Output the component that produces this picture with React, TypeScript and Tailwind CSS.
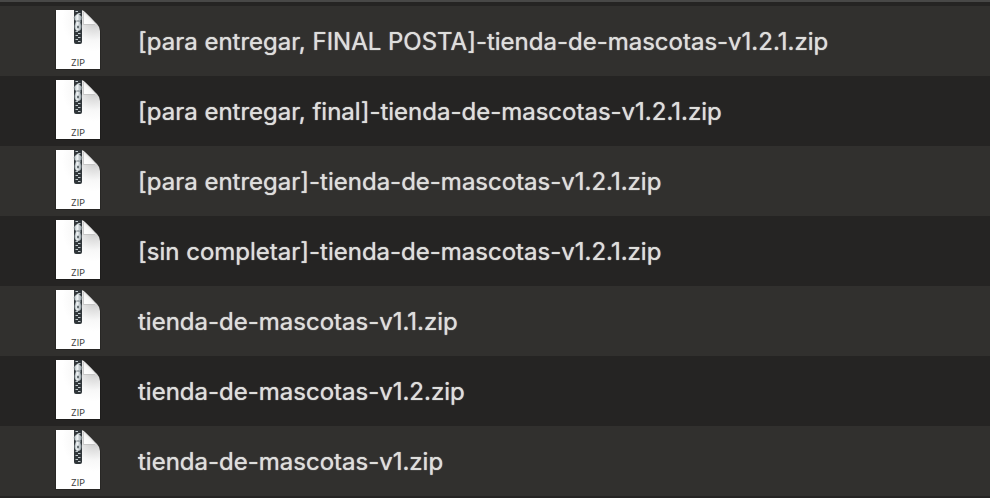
const files = [
  '[para entregar, FINAL POSTA]-tienda-de-mascotas-v1.2.1.zip',
  '[para entregar, final]-tienda-de-mascotas-v1.2.1.zip',
  '[para entregar]-tienda-de-mascotas-v1.2.1.zip',
  '[sin completar]-tienda-de-mascotas-v1.2.1.zip',
  'tienda-de-mascotas-v1.1.zip',
  'tienda-de-mascotas-v1.2.zip',
  'tienda-de-mascotas-v1.zip',
];

const teeth = Array.from({ length: 16 }, (_, i) => i);

function ZipIcon({ id }: { id: string }) {
  return (
    <div className="relative h-[62px] w-11 shrink-0">
      <svg viewBox="0 0 44 62" className="h-full w-full overflow-visible" aria-hidden="true">
        <defs>
          <radialGradient id={`page-${id}`} gradientUnits="userSpaceOnUse" cx="38" cy="10" r="32">
            <stop offset="0" stopColor="#c4c4c4" />
            <stop offset="0.3" stopColor="#dedede" />
            <stop offset="0.65" stopColor="#f8f8f8" />
            <stop offset="1" stopColor="#ffffff" />
          </radialGradient>
          <linearGradient id={`fold-${id}`} gradientUnits="userSpaceOnUse" x1="28" y1="14" x2="35" y2="7">
            <stop offset="0" stopColor="#ffffff" />
            <stop offset="0.7" stopColor="#f8f8f8" />
            <stop offset="1" stopColor="#d8d8d8" />
          </linearGradient>
          <linearGradient id={`pull-${id}`} x1="0" y1="0" x2="1" y2="0">
            <stop offset="0" stopColor="#9aa6ab" />
            <stop offset="0.4" stopColor="#f4f8fa" />
            <stop offset="1" stopColor="#8b979c" />
          </linearGradient>
        </defs>
        <path d="M-1 1H27L42 15Q45 18 45 22V60H-1Z" fill="#000000" opacity="0.18" />
        <path d="M0 0H25Q27 0 29 2L41 14Q44 17 44 21V59H0Z" fill={`url(#page-${id})`} />
        <path d="M27 1V14.500H40Q36 8 27 1Z" fill={`url(#fold-${id})`} />
        <path d="M27.500 2V14.500H39" fill="none" stroke="#b8b8b8" strokeWidth="0.7" />
        <path d="M18 0H26V32Q26 34 24 34H20Q18 34 18 32Z" fill="#30363a" />
        {teeth.map((i) => (
          <rect key={i} x={i % 2 ? 22 : 19.5} y={1 + i * 2} width="2.5" height="1" fill="#c2cace" />
        ))}
        <path d="M20 5Q22 2 24 5L26 7Q26 10 24 11L25.500 16Q25.500 21 22 21Q18.500 21 18.500 16L20 11Q18 10 18 7Z" fill={`url(#pull-${id})`} stroke="#5b656a" strokeWidth="0.4" />
        <path d="M20.500 11H23.500M21.500 16H22.500V18H21.500Z" fill="none" stroke="#505a60" strokeWidth="0.8" />
      </svg>
      <span className="absolute inset-x-0 bottom-1 text-center text-[9px] leading-[10px] text-[#3c3c3c]">ZIP</span>
    </div>
  );
}

export default function App() {
  return (
    <main className="min-h-screen border-t-2 border-[#484847] bg-[#252423] pt-1 font-['Inter','Liberation_Sans',sans-serif] text-[#dededc]">
      <ul>
        {files.map((name, i) => (
          <li key={name} className="flex h-[70px] items-center gap-[38px] px-14 odd:bg-[#31302e]">
            <ZipIcon id={String(i)} />
            <span className="whitespace-nowrap pt-[2px] text-[24px] leading-8 [text-shadow:0_0_1px_#dededc]">{name}</span>
          </li>
        ))}
      </ul>
    </main>
  );
}
